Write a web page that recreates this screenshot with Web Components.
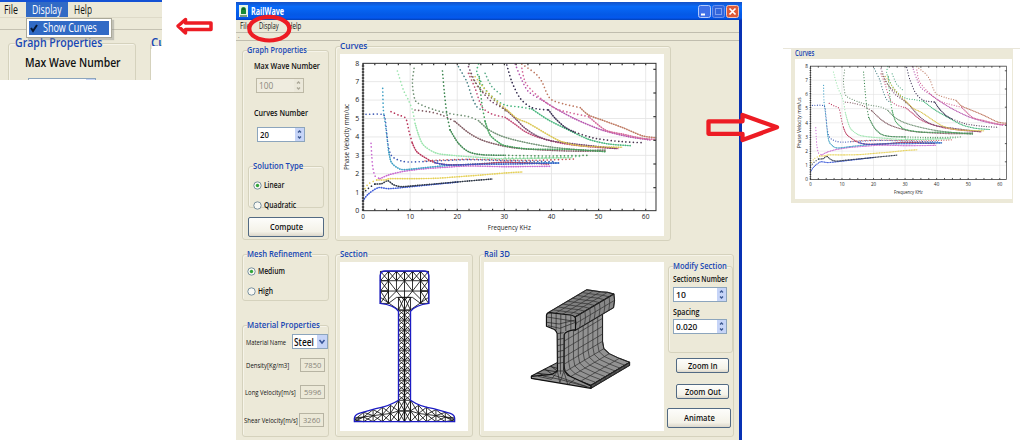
<!DOCTYPE html>
<html lang="en">
<head>
<meta charset="utf-8">
<title>RailWave</title>
<style>
html,body{margin:0;background:#fff}
body{width:1022px;height:440px;overflow:hidden;font-family:"Open Sans","Noto Sans",sans-serif;font-size:9px;color:#111}
</style>
</head>
<body>
<rw-page></rw-page>
<script>
const fits=[];
function define(name,html,setup){
  const t=document.createElement('template');t.innerHTML=html;
  customElements.define(name,class extends HTMLElement{
    constructor(){super();this.attachShadow({mode:'open'}).appendChild(t.content.cloneNode(true));}
    connectedCallback(){if(setup&&!this.ready){this.ready=true;setup(this,this.shadowRoot);}}
  });
}
/* Label condensed horizontally to the width given in "w". */
define('rw-text',`<style>:host{display:block;height:12px;line-height:12px;white-space:nowrap;flex:none}span{display:inline-block;transform-origin:0 50%}</style><span><slot></slot></span>`,(el,r)=>{
  fits.push(()=>{const w=+el.getAttribute('w'),s=r.querySelector('span');el.style.width=w+'px';s.style.transform='scaleX('+(w/s.offsetWidth)+')';});
});
define('rw-group',`<style>
:host{display:block;box-sizing:border-box;border:1px solid #d5d2bd;border-radius:3px;box-shadow:inset 1px 1px #f6f4e9}
header{display:flex;height:12px;margin-top:-7px;padding-left:var(--tx,4px);color:#1746b4;font-weight:600;font-size:var(--ts,9.5px)}
rw-text{background:#ece9d8}
</style><header><rw-text></rw-text></header><slot></slot>`,(el,r)=>{const t=r.querySelector('rw-text');t.setAttribute('w',el.getAttribute('w'));t.textContent=el.getAttribute('label');});
define('rw-spin',`<style>
:host{display:flex;box-sizing:border-box;height:15px;border:1px solid #8ca5bd;background:#fff;font-weight:600;font-size:9.5px;align-items:center;padding-left:2px}
:host([disabled]){background:#efecdf;border-color:#bdb9a6;color:#8c897c;font-weight:400}
i{margin-left:auto;width:9px;height:13px;background:#c6d4f7;color:#3b5790}
:host([disabled]) i{background:#ebe8da;color:#aaa797}svg{display:block}
</style><slot></slot><i><svg width="9" height="13"><path d="M3 4.5l1.500-1.500 1.500 1.500M3 8.500l1.500 1.500 1.500-1.500" fill="none" stroke="currentColor" stroke-width="1.3"/></svg></i>`);
define('rw-field',`<style>:host{display:block;box-sizing:border-box;height:14px;width:25px;border:1px solid #b7b4a3;padding-left:3px;line-height:12px;color:#88857a;font-size:8.5px}</style><slot></slot>`);
define('rw-button',`<style>:host{display:flex;box-sizing:border-box;align-items:center;justify-content:center;border:1px solid #526a83;border-radius:2px;background:linear-gradient(#fdfdfb,#f4f2e8 75%,#dcd7ca);font-weight:600;font-size:9.5px}</style><slot></slot>`);
define('rw-radio',`<style>:host{display:flex;height:12px;align-items:center;gap:2px;font-weight:600;font-size:9px}svg{flex:none}.d{display:none}:host([checked]) .d{display:block}</style>
<svg width="9" height="9"><circle cx="4.5" cy="4.5" r="3.7" fill="#f8f8f3" stroke="#6c8797" stroke-width=".9"/><circle class="d" cx="4.5" cy="4.5" r="1.7" fill="#32a53a"/></svg><slot></slot>`);

/* Dispersion curves: colour, dotted part, dense part (plot units). */
const CURVES=[
['#3a58d8','','84,482 100,462 130,443 160,446 210,442 300,433 370,426'],
['#2b3442','84,460 100,445 120,432','120,432 140,431 158,422 175,434 200,440 250,436 320,430 400,423 472,417'],
['#e5d055','84,455 100,432 125,420','125,420 150,420 165,416 230,416 300,415 370,410 440,405 508,399 562,396'],
['#c968d0','108,310 110,345 113,380 120,408 135,416','135,416 160,405 200,395 260,387 330,382 400,378 510,380 645,379'],
['#3d58b4','93,223 140,223 150,235 155,280 160,320 168,345 185,358 220,366 300,363 400,359 510,362 660,365',''],
['#3e9fc4','143,145 145,210 152,260 160,330','160,330 168,365 185,382 205,389 260,384 320,378 400,373 510,368 670,369'],
['#b83258','168,215 190,225 212,235 222,275 232,310','232,310 245,335 270,353 300,368 340,374 420,373 510,367 640,372'],
['#3157c8','','300,368 340,375 430,373 540,372 672,369'],
['#c45050','270,363 300,361 400,358 500,360 600,361 720,357',''],
['#9be4ad','187,93 205,150 220,180 232,210 240,250','240,250 250,283 265,315 300,338 340,345 430,352 510,356 710,353'],
['#719175','237,85 232,130 240,180 260,195 300,210 340,220 400,230 430,242','430,242 455,265 480,280 510,292 560,305 640,320 740,330 810,330'],
['#805b62','240,210 280,215 320,225 360,245','360,245 400,278 440,300 500,317 560,326 700,333 810,333'],
['#36834a','322,93 328,160 335,220 345,270','345,270 370,310 400,335 440,344 510,346'],
['#4c9158','510,346 640,348 760,346',''],
['#467e82','370,80 395,125 410,170 425,200 440,210',''],
['#c24c76','400,100 420,145 440,200 470,222 510,232','510,232 540,253 570,275 610,292 680,310 760,320 850,326'],
['#74456b','400,80 420,125 445,160 470,185 510,208','510,208 540,235 570,265 610,290 650,303 720,312 845,326'],
['#44b57b','430,72 425,95 435,120 450,148 480,178 510,195 560,202 590,207','590,207 640,240 700,270 760,298 820,312 885,317'],
['#409f58','432,110 440,190 450,245','450,245 465,285 490,307 510,317 580,327 700,328 810,335'],
['#d9c44d','420,110 460,160 510,205','510,205 545,235 580,250 640,285 680,305 740,318 860,322'],
['#8b7954','405,100 430,143 465,170 510,212',''],
['#342b4e','515,75 530,125 555,175 590,203 640,210','640,210 660,235 690,262 720,277'],
['#493651','720,277 760,290 790,297 860,305 920,308',''],
['#b553ad','540,72 560,120 580,155 620,180','620,180 660,205 720,237 800,270 880,290 945,300'],
['#d46798','560,85 572,130 610,170 660,205 700,217 760,230','760,230 810,270 860,282 920,295 962,298'],
['#be7860','560,72 600,100 620,125 635,160 650,180 690,193 735,203','735,203 760,225 800,240 860,262 920,287 962,293'],
['#5aab88','450,100 470,140 500,165',''],
['#7ac890','510,354 600,354 740,349','']
];
function smooth(s){
  const p=s.split(' ').map(a=>a.split(',').map(Number));let d='M'+p[0];
  for(let i=0;i<p.length-1;i++){const a=p[i-1]||p[i],b=p[i],c=p[i+1],e=p[i+2]||c;
    d+=`C${b[0]+(c[0]-a[0])/7},${b[1]+(c[1]-a[1])/7} ${c[0]-(e[0]-b[0])/7},${c[1]-(e[1]-b[1])/7} ${c}`;}
  return d;
}
define('rw-chart',`<style>:host{display:block;background:#fff}svg{display:block;width:100%;height:100%}text{font-family:"Open Sans",sans-serif;font-size:21px;fill:#222}</style><div style="height:100%"></div>`,(el,r)=>{
  let s='<svg viewBox="15 42 971 546" preserveAspectRatio="none">';
  for(let i=1;i<8;i++)s+=`<path d="M84 ${512-i*55.3}H962" stroke="#e3e3e3" stroke-width="2.5"/>`;
  for(let i=1;i<7;i++)s+=`<path d="M${84+i*141.2} 70V512" stroke="#e3e3e3" stroke-width="2.5"/>`;
  s+='<g fill="none" stroke-linecap="round">';
  for(const[c,a,b]of CURVES){
    if(a)s+=`<path d="${smooth(a)}" stroke="${c}" stroke-width="5" stroke-dasharray=".1 11"/>`;
    if(b)s+=`<path d="${smooth(b)}" stroke="${c}" stroke-width="3.2" opacity=".55"/><path d="${smooth(b)}" stroke="${c}" stroke-width="4.8" stroke-dasharray=".1 7"/>`;}
  s+='</g><rect x="84" y="70" width="878" height="442" fill="none" stroke="#333" stroke-width="3"/><g stroke="#333" stroke-width="3.5">';
  for(let x=84;x<960;x+=35.3)s+=`<path d="M${x} 512v-6M${x} 70v6"/>`;
  for(let y=88;y<500;y+=71)s+=`<path d="M962 ${y}h-8"/>`;
  s+='<path d="M84 76V512" stroke-dasharray="4 5" stroke-width="7"/></g>';
  for(let i=0;i<9;i++)s+=`<text x="67" y="${519-i*55.3}" text-anchor="middle">${i}</text>`;
  for(let i=0;i<7;i++)s+=`<text x="${84+i*141.2}" y="538" text-anchor="middle" textLength="${i?23:11}" lengthAdjust="spacingAndGlyphs">${i*10}</text>`;
  s+=`<text x="458" y="569" textLength="129" lengthAdjust="spacingAndGlyphs">Frequency KHz</text><text transform="translate(43 390) rotate(-90)" textLength="198" lengthAdjust="spacingAndGlyphs">Phase Velocity mm/${el.getAttribute('unit')}</text></svg>`;
  r.querySelector('div').innerHTML=s;
});

/* Triangulated rail cross-section. */
define('rw-section',`<style>:host{display:block;background:#fff}svg{display:block;width:100%;height:100%}</style><div style="height:100%"></div>`,(el,r)=>{
  let d='';
  const box=(x,y,w,h)=>{d+=`M${x} ${y}h${w}v${h}h${-w}zL${x+w} ${y+h}M${x+w} ${y}L${x} ${y+h}`;};
  for(let i=0;i<6;i++)box(136+i*24,77,24,28);
  for(const x of[136,256]){box(x,105,24,31);box(x,136,24,37);}
  d+='M160 105V173M256 105V173M136 136H280M208 77V165M160 105L184 136L208 105L232 136L256 105M184 136V105M232 136V105M160 160L184 136L208 165L232 136L256 160M160 173L184 155H232L256 173M136 155L190 192M280 155L226 192';
  box(190,155,18,38);box(208,155,18,38);
  for(let i=0;i<9;i++){const y=193+i*30;
    d+=`M190 ${y}h36M190 ${y}l18 15l-18 15M226 ${y}l-18 15l18 15M190 ${y+15}L208 ${y}L226 ${y+15}L208 ${y+30}Z`;}
  box(190,463,18,32);box(208,463,18,32);box(190,495,18,32);box(208,495,18,32);
  for(const k of[-1,1]){const X=v=>208+k*v;
    const c=[[18,463],[42,478],[66,484],[94,491],[122,499],[150,516]];
    for(let i=0;i<c.length-1;i++){const[a,b]=c[i],[e,f]=c[i+1],m=(b+527)/2,n=(f+527)/2;
      d+=`M${X(a)} ${b}V527M${X(a)} ${m}L${X(e)} ${n}M${X(a)} ${b}L${X(e)} ${n}M${X(a)} ${m}L${X(e)} ${f}M${X(a)} ${m}L${X(e)} 527M${X(a)} 527L${X(e)} ${n}`;}}
  r.querySelector('div').innerHTML=`<svg viewBox="15 49 383 506" preserveAspectRatio="none"><path d="${d}" fill="none" stroke="#151515" stroke-width="2.6"/><path d="M208 193V527" stroke="#111" stroke-width="4"/><path d="M135 173V90Q137 76 150 76H266Q279 76 281 90V173Q240 178 226 197V463Q255 483 295 488L345 502Q358 507 358 517V527H58V517Q59 507 72 502L122 488Q165 480 190 463V197Q178 178 135 173Z" fill="none" stroke="#1c1cc4" stroke-width="4"/></svg>`;
});

/* Extruded rail: each strip of the profile is swept along (116,-69). */
define('rw-rail',`<style>:host{display:block;background:#fff}svg{display:block;width:100%;height:100%}</style><div style="height:100%"></div>`,(el,r)=>{
  const V=[116,-69],N=8;
  const sweep=(p,fill)=>{
    const back=p.map(([x,y])=>[x+V[0],y+V[1]]).reverse();
    let d='';for(let i=0;i<=N;i++)d+='M'+p.map(([x,y])=>[x+V[0]*i/N,y+V[1]*i/N]).join('L');
    for(const[x,y]of p)d+=`M${x} ${y}l${V[0]} ${V[1]}`;
    return`<polygon points="${p.concat(back).join(' ')}" fill="${fill}" stroke="#111" stroke-width="3"/><path d="${d}" fill="none" stroke="#2c2c2c" stroke-width="2"/>`;};
  let s='<svg viewBox="13 48 539 507" preserveAspectRatio="none"><g stroke-linejoin="round">';
  s+='<path d="M155 390L232 350L250 365L250 390L333 422L155 397Z" fill="#858585" stroke="#111" stroke-width="3"/><path d="M170 382L232 388M190 371L235 378M210 361L240 369M175 380L215 401M195 369L245 404M213 360L275 409" stroke="#222" stroke-width="2.5"/>';
  s+=sweep([[252,262],[252,286],[252,310],[252,333],[252,355],[256,377],[272,392],[302,406],[333,418]],'#929292');
  s+=sweep([[333,418],[333,427]],'#555');
  s+=sweep([[205,200],[225,203],[246,206],[267,208],[286,213]],'#808080');
  s+=sweep([[286,213],[288,232],[285,254]],'#888');
  s+='<path d="M155 391L217 385L233 375L232 263Q228 249 215 247L200 241V208Q201 200 210 200L270 207Q285 208 287 218V251Q257 255 253 266L252 372L264 388L333 420V427L155 397Z" fill="#929292" stroke="#111" stroke-width="3.5"/>';
  s+='<path d="M201 213L285 226M201 229L238 234L286 222M215 201V245M229 203V252M243 204V262M258 206V255M273 208V251M205 239L240 247L287 229M232 263L252 260M232 281L252 277M232 299L252 295M232 317L252 313M232 335L252 331M232 353L252 349M242 257V385M232 375H252M175 391L215 400L233 376L240 410L252 376L264 416L285 400M190 390L240 400L320 422M217 386L333 426" fill="none" stroke="#242424" stroke-width="2.1"/></g></svg>';
  r.querySelector('div').innerHTML=s;
});

define('rw-preview',`<style>
:host{display:block;position:relative;width:162px;height:80px;overflow:hidden;background:#ece9d8;font-size:12px}
.t{height:2px;background:#1452d4}
nav{display:flex;height:15px;align-items:center;padding-left:4px;border-bottom:1px solid #dedac8}
nav>span{display:flex;align-items:center;justify-content:center;margin:0 6px 0 8px;width:42px;height:15px;background:#316ac5;color:#fff}
.bar{height:11px;border-bottom:1px solid #c5c2b2}
.row{display:flex;padding:13px 0 0 8px;gap:14px}
rw-group{--ts:12px;--tx:6px}
.g{width:128px;height:60px;flex:none}.c{width:80px;height:60px;--tx:0px;border-right:0;flex:none}
.c div{height:50px;margin-top:-2px;background:#fff}
.mx{margin:8px 0 9px 16px;color:#111;font-weight:600}
.in{margin-left:19px;width:68px}
.pop{position:absolute;left:26px;top:18px;width:86px;height:20px;box-sizing:border-box;background:#fff;border:1px solid #aaa899;box-shadow:2px 2px 1px #8886;padding:2px}
.pop div{display:flex;align-items:center;height:14px;background:#316ac5;color:#fff;gap:5px}
.cut{position:absolute;left:152px;top:46px;width:10px;height:34px;background:#fff}
</style><div class="t"></div><nav><rw-text w="14">File</rw-text><span><rw-text w="30">Display</rw-text></span><rw-text w="18">Help</rw-text></nav><div class="bar"></div>
<div class="row"><rw-group class="g" label="Graph Properties" w="87"><rw-text class="mx" w="96">Max Wave Number</rw-text><rw-spin class="in"></rw-spin></rw-group><rw-group class="c" label="Curves" w="38"><div></div></rw-group></div>
<i class="cut"></i>
<div class="pop"><div><svg width="8" height="10" style="margin-left:1px"><path d="M1 5l2 3 4-6" fill="none" stroke="#071630" stroke-width="2"/></svg><rw-text w="54">Show Curves</rw-text></div></div>`);

define('rw-window',`<style>
:host{display:flex;flex-direction:column;box-sizing:border-box;width:506px;height:438px;margin-top:2px;background:#ece9d8;border-right:3px solid #0831b4;flex:none}
.title{display:flex;align-items:center;height:18px;margin-right:-3px;background:linear-gradient(#1550c5,#086af8 25%,#0459e6 70%,#0458ee 88%,#0340b8);color:#fff;font-weight:700;font-size:10px;padding:0 3px;gap:3px;box-sizing:border-box}
.btns{margin-left:auto;display:flex;gap:1px}.btns svg{display:block}
nav{display:flex;align-items:center;height:12px;padding-left:4px;gap:9px;border-bottom:1px solid #c0bdae;font-size:8.5px}
.bar{height:7px;border-bottom:1px solid #c0bdae;font-size:6px;line-height:6px;padding-left:2px}
main{display:flex;gap:6px;padding:5px 0 0 6px}
.left{width:87px;display:flex;flex-direction:column;padding-top:4px;flex:none}
.right{display:flex;flex-direction:column;gap:13px;flex:none}
.gp{height:190px}.mesh{height:47px;margin-top:14px}.mat{height:112px;margin-top:24px}
.b{font-weight:600}
.cur{width:336px;height:195px;--tx:4px}
.cur rw-chart{width:324px;height:182px;margin:2px 0 0 4px}
.low{display:flex;gap:6px}
.sec{width:138px;height:183px}.sec rw-section{width:128px;height:169px;margin:2px 0 0 4px}
.rail{width:255px;height:183px}
.in{display:flex;gap:4px;padding:2px 0 0 4px}
.in rw-rail{width:180px;height:169px}
.side{display:flex;flex-direction:column;padding-top:4px;width:65px;flex:none}
.mod{height:87px}
.line{display:flex;align-items:center;height:15px}
.line rw-text{font-size:8px}
.line .combo rw-text{font-size:10px}
.combo{display:flex;align-items:center;box-sizing:border-box;width:37px;height:15px;background:#fff;border:1px solid #8ca5bd;padding-left:1px;font-weight:600;font-size:10px}
</style>
<div class="title"><svg width="9" height="12"><rect width="9" height="12" fill="#e8f5e3"/><path d="M2 5q0-3 2.500-3t2.500 3v4H2z" fill="#188b36"/><path d="M3 4h3M1 11h7" stroke="#063d1b"/></svg><rw-text w="33">RailWave</rw-text>
<div class="btns"><svg width="13" height="13"><rect x=".5" y=".5" width="12" height="12" rx="2" fill="#3f70e8" stroke="#b4c9fa"/><path d="M3 9.500h4" stroke="#fff" stroke-width="2"/></svg><svg width="13" height="13"><rect x=".5" y=".5" width="12" height="12" rx="2" fill="#3265dc" stroke="#6b91ec"/><rect x="3.500" y="3.500" width="6" height="6" fill="none" stroke="#7ea0f0"/></svg><svg width="13" height="13"><rect x=".5" y=".5" width="12" height="12" rx="2" fill="#dd5a38" stroke="#f5c6b9"/><path d="M3.500 3.500l6 6m0-6l-6 6" stroke="#fff" stroke-width="1.7"/></svg></div></div>
<nav><rw-text w="10">File</rw-text><rw-text w="20">Display</rw-text><rw-text w="13">Help</rw-text></nav><div class="bar">.</div>
<main><div class="left">
<rw-group class="gp" label="Graph Properties" w="60">
 <rw-text class="b" w="66" style="margin:4px 0 0 11px">Max Wave Number</rw-text>
 <rw-spin disabled style="margin:6px 0 0 13px;width:48px"><rw-text w="14">100</rw-text></rw-spin>
 <rw-text class="b" w="54" style="margin:14px 0 0 11px">Curves Number</rw-text>
 <rw-spin style="margin:8px 0 0 14px;width:48px"><rw-text w="9">20</rw-text></rw-spin>
 <rw-group label="Solution Type" w="50" style="margin:24px 4px 0 5px;height:42px"><rw-radio checked style="margin:7px 0 0 4px"><rw-text w="20">Linear</rw-text></rw-radio><rw-radio style="margin:8px 0 0 4px"><rw-text w="32">Quadratic</rw-text></rw-radio></rw-group>
 <rw-button style="margin:9px 4px 0 5px;height:20px"><rw-text w="33">Compute</rw-text></rw-button>
</rw-group>
<rw-group class="mesh" label="Mesh Refinement" w="65"><rw-radio checked style="margin:5px 0 0 4px"><rw-text w="27">Medium</rw-text></rw-radio><rw-radio style="margin:8px 0 0 4px"><rw-text w="15">High</rw-text></rw-radio></rw-group>
<rw-group class="mat" label="Material Properties" w="73">
 <div class="line" style="margin:3px 0 0 3px"><rw-text w="40">Material Name</rw-text><span class="combo" style="margin-left:6px"><rw-text w="20">Steel</rw-text><svg width="10" height="13" style="margin-left:auto;background:#c6d4f7"><path d="M2.500 5l2.500 3 2.500-3" fill="none" stroke="#38569a" stroke-width="1.5"/></svg></span></div>
 <div class="line" style="margin:8px 0 0 3px"><rw-text w="43">Density[Kg/m3]</rw-text><rw-field style="margin-left:11px"><rw-text w="17">7850</rw-text></rw-field></div>
 <div class="line" style="margin:12px 0 0 2px"><rw-text w="51">Long Velocity[m/s]</rw-text><rw-field style="margin-left:4px"><rw-text w="17">5996</rw-text></rw-field></div>
 <div class="line" style="margin:13px 0 0 1px"><rw-text w="54">Shear Velocity[m/s]</rw-text><rw-field style="margin-left:1px"><rw-text w="17">3260</rw-text></rw-field></div>
</rw-group>
</div>
<div class="right"><rw-group class="cur" label="Curves" w="27"><rw-chart unit="uc"></rw-chart></rw-group>
<div class="low"><rw-group class="sec" label="Section" w="28"><rw-section></rw-section></rw-group>
<rw-group class="rail" label="Rail 3D" w="26"><div class="in"><rw-rail></rw-rail><div class="side">
 <rw-group class="mod" label="Modify Section" w="54"><rw-text class="b" w="55" style="margin:1px 0 0 4px">Sections Number</rw-text><rw-spin style="margin:2px 5px 0 4px"><rw-text w="10">10</rw-text></rw-spin><rw-text class="b" w="26" style="margin:4px 0 0 4px">Spacing</rw-text><rw-spin style="margin:1px 5px 0 4px"><rw-text w="21">0.020</rw-text></rw-spin></rw-group>
 <rw-button style="margin:5px 4px 0 8px;height:15px"><rw-text w="30">Zoom In</rw-text></rw-button>
 <rw-button style="margin:11px 4px 0 8px;height:15px"><rw-text w="36">Zoom Out</rw-text></rw-button>
 <rw-button style="margin:9px 2px 0 -1px;height:20px"><rw-text w="31">Animate</rw-text></rw-button>
</div></div></rw-group></div></div></main>`);

define('rw-clip',`<style>:host{display:block;width:237px;margin:48px 0 0 41px;border-top:1px solid #e9e6da}
.p{width:222px;height:154px;margin-left:8px;background:#ece9d8;box-sizing:border-box;padding:0 0 0 4px;color:#1746b4;font-weight:600;font-size:8px}
rw-text{height:10px;line-height:8px}rw-chart{width:217px;height:140px;font-weight:400}</style><div class="p"><rw-text w="19">Curves</rw-text><rw-chart unit="us"></rw-chart></div>`);

define('rw-page',`<style>:host{display:grid;grid-template-columns:236px 506px 280px;align-items:start;position:relative;width:1022px;height:440px;overflow:hidden}
.marks{position:absolute;left:0;top:0;pointer-events:none}</style><rw-preview></rw-preview><rw-window></rw-window><rw-clip></rw-clip>
<svg class="marks" width="1022" height="440" fill="none" stroke="#ed1c24"><ellipse cx="269.300" cy="28.700" rx="20" ry="11.800" stroke-width="4.200"/><path d="M178 26L185.500 19.500V23H211V29.500H185.500V33Z" fill="#fff" stroke-width="3.500" stroke-linejoin="round"/><path d="M708.500 121.300H742.500V115L777 127.300L742.500 140V133.800H708.500Z" stroke-width="4.300" stroke-linejoin="round"/></svg>`);
fits.forEach(f=>f());
</script>
</body>
</html>
